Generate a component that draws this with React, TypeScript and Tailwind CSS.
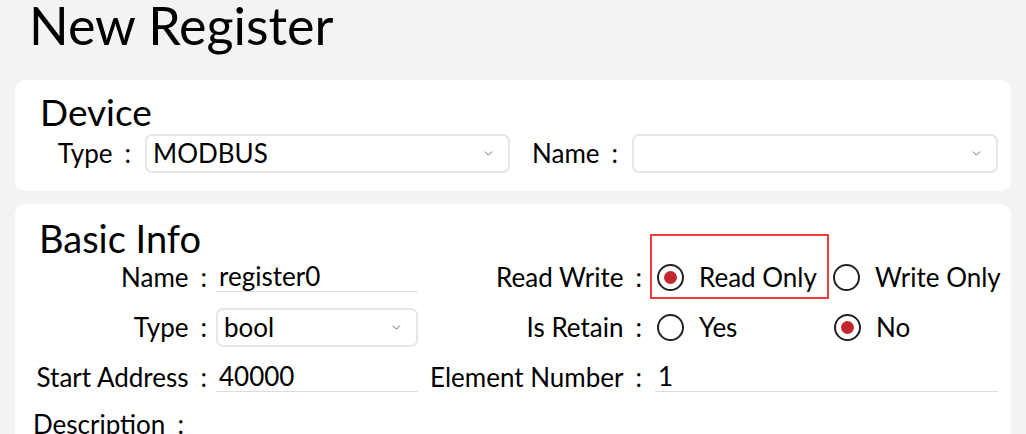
import { ChevronDown } from "lucide-react";

function Select({ value, className }: { value: string; className: string }) {
  return (
    <div
      className={`flex h-[39px] shrink-0 items-center justify-between rounded-[7px] border-2 border-[#e6e6e6] bg-white pl-[6px] pr-[13px] ${className}`}
    >
      <span>{value}</span>
      <ChevronDown className="h-[13px] w-[13px] text-[#555]" strokeWidth={1.6} />
    </div>
  );
}

function Underline({ value, className }: { value: string; className: string }) {
  return (
    <div className={`flex h-[30px] shrink-0 items-center border-b border-[#dcdcdc] pl-[3px] ${className}`}>
      {value}
    </div>
  );
}

function Radio({ checked, label }: { checked?: boolean; label: string }) {
  return (
    <div className="flex items-center gap-[15px] whitespace-nowrap">
      <div className="flex h-[27px] w-[27px] shrink-0 items-center justify-center rounded-full border-[2.5px] border-[#222]">
        {checked && <div className="h-[13px] w-[13px] rounded-full bg-[#c1272d]" />}
      </div>
      <span>{label}</span>
    </div>
  );
}

function Label({ text, className }: { text: string; className: string }) {
  return (
    <div className={`flex shrink-0 justify-end whitespace-nowrap ${className}`}>
      {text}
      <span className="ml-[12px]">:</span>
    </div>
  );
}

export default function App() {
  return (
    <div className="h-[434px] w-[1026px] overflow-hidden bg-[#f3f3f3] font-['Lato','Liberation_Sans',sans-serif] text-[26px] text-black">
      <h1 className="h-[80px] pl-[29px] text-[52px] leading-[50px]">New Register</h1>

      <div className="mx-[15px] h-[111px] rounded-[10px] bg-white pl-[24px] pt-[12px]">
        <div className="pl-[1px] text-[37px] leading-[40px]">Device</div>
        <div className="mt-[2px] flex items-center">
          <Label text="Type" className="w-[92px]" />
          <Select value="MODBUS" className="ml-[14px] w-[365px]" />
          <Label text="Name" className="w-[108px]" />
          <Select value="" className="ml-[14px] w-[366px]" />
        </div>
      </div>

      <div className="mx-[15px] mt-[13px] h-[240px] rounded-[10px] bg-white pl-[18px] pt-[16px]">
        <div className="pl-[6px] text-[38px] leading-[36px]">Basic Info</div>
        <div className="mt-[-4px] flex flex-col">
          <div className="flex h-[50px] items-center">
            <Label text="Name" className="w-[174px]" />
            <Underline value="register0" className="ml-[9px] w-[202px]" />
            <Label text="Read Write" className="w-[224px]" />
            <div className="relative ml-[15px] grid w-[345px] grid-cols-[176px_1fr]">
              <div className="pointer-events-none absolute left-[-7px] top-[-24px] h-[65px] w-[179px] border-2 border-[#ef3d3d]" />
              <Radio checked label="Read Only" />
              <Radio label="Write Only" />
            </div>
          </div>

          <div className="flex h-[50px] items-center">
            <Label text="Type" className="w-[174px]" />
            <Select value="bool" className="ml-[9px] w-[202px]" />
            <Label text="Is Retain" className="w-[224px]" />
            <div className="ml-[15px] grid w-[345px] grid-cols-[177px_1fr]">
              <Radio label="Yes" />
              <Radio checked label="No" />
            </div>
          </div>

          <div className="flex h-[50px] items-center">
            <Label text="Start Address" className="w-[174px]" />
            <Underline value="40000" className="ml-[9px] w-[202px]" />
            <Label text="Element Number" className="w-[224px]" />
            <Underline value="1" className="ml-[13px] w-[343px]" />
          </div>

          <div className="flex h-[44px] items-center">
            <Label text="Description" className="justify-start" />
          </div>
        </div>
      </div>
    </div>
  );
}
